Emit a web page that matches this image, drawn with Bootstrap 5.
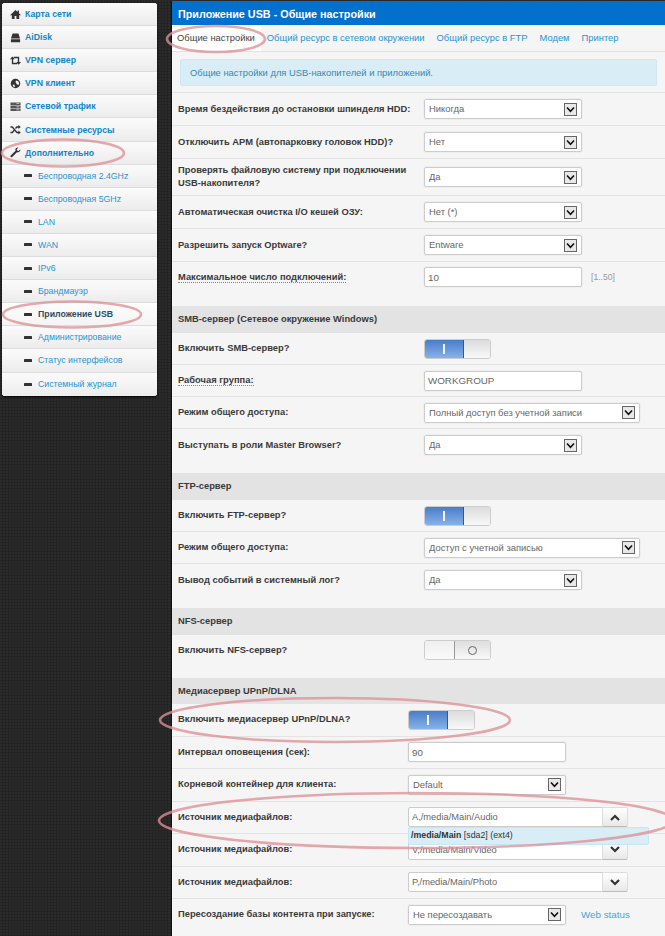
<!DOCTYPE html>
<html lang="ru">
<head>
<meta charset="utf-8">
<title>Приложение USB</title>
<link href="https://cdn.jsdelivr.net/npm/bootstrap@5.3.0/dist/css/bootstrap.min.css" rel="stylesheet">
<style>
html,body{height:936px;overflow:hidden}
body{background-color:#232323;background-image:radial-gradient(circle at 1px 1px,#2b2b2b 1px,transparent 1.2px);background-size:3px 3px;font-family:"Liberation Sans",Arial,sans-serif;font-size:9.4px;line-height:13px;color:#333;position:relative}
.page-wrap{padding-top:1px;height:936px}
.side-menu{width:155px;margin:2px 0 0 2px;border-radius:3px;box-shadow:0 1px 2px #000;background:#fff;height:393px;flex:none}
.side-menu .list-group-item{height:23.1px;padding:0 0 0 8px;border:0;border-bottom:1px solid #dcdcdc;background:linear-gradient(#fbfbfb,#ececec);color:#0f86c9;font-size:8.75px;line-height:22px;display:flex;align-items:center;gap:4px;font-weight:700;border-radius:0}
.side-menu .list-group-item:first-child{border-radius:3px 3px 0 0}
.side-menu .list-group-item:last-child{border-radius:0 0 3px 3px;border-bottom:0}
.side-menu .sub-item{padding-left:22px;font-weight:400;gap:6px;color:#2a93d2}
.side-menu .sub-item.current{font-weight:700;color:#2e4d66;background:linear-gradient(#fdfdfd,#f4f4f4)}
.ico{width:11px;height:11px;flex:none;fill:#333}
.dash{width:8px;height:3px;background:#333;flex:none;border-radius:.5px}
.main-pane{margin-left:14px;width:494px;flex:none;background:#f5f5f5;height:936px;overflow:hidden;border-left:1px solid #111}
.pane-head{height:24px;background:#0270cd;color:#fff;font-weight:700;font-size:10.8px;line-height:26px;padding-left:6px}
.tab-strip{height:27px;border-bottom:1px solid #e2e2e2;padding-left:0;flex-wrap:nowrap;font-size:9.4px}
.tab-strip .nav-link{padding:0 6px;line-height:26px;color:#2a93d2;border:0;border-radius:0;white-space:nowrap}
.tab-strip .nav-link.active{background:#fff;color:#444;padding:0 6px 0 5px;height:26px}
.note-box{margin:7px 8px 6px 8px;height:27px;padding:0 9px;display:flex;align-items:center;background:#d9edf7;border:1px solid #cfe7f2;border-radius:2px;color:#3a87ad;font-size:9.4px}
.cfg-row{height:32px;border-top:1px solid #e3e3e3;display:flex;align-items:center;padding:0 6px 0;font-size:9.35px}
.cfg-row.std{height:33px}
.cfg-row.tall{height:37px}
.cfg-row.trail{height:45px;align-items:flex-start;padding-top:5px}
.cfg-row.tail{height:45px;align-items:flex-start;padding-top:6px}
.cfg-row.tail.short{height:44px;padding-top:5px}
.media .cfg-row{height:32.5px}
.cfg-label{width:246px;flex:none;font-weight:700;color:#3a3a3a;margin:0}
.media .cfg-label{width:230px}
.dotted{border-bottom:1px dotted #888}
.sec-head{height:26px;background:#e3e3e3;font-weight:700;padding-left:6px;line-height:26px;color:#3a3a3a;font-size:9.35px}
.media .sec-head{height:25px}
.ctl{width:158px;height:20px;min-height:20px;padding:0 4px;font-size:9.4px;line-height:18px;color:#666;border:1px solid #ccc;border-radius:2px;box-shadow:0 0 0 1px #eee;background-color:#fff}
input.ctl{padding:0 3px;font-size:9.8px}
select.ctl{padding:0 18px 0 4px;appearance:none;background-repeat:no-repeat;background-position:right 4px center;background-size:13px 13px;background-image:url("data:image/svg+xml,%3Csvg xmlns='http://www.w3.org/2000/svg' viewBox='0 0 13 13'%3E%3Crect x='.5' y='.5' width='12' height='12' fill='%23e8e8e8' stroke='%23666'/%3E%3Cpath d='M3 4.500l3.500 3.800 3.500-3.800' fill='none' stroke='%23111' stroke-width='1.600'/%3E%3C/svg%3E")}
.ctl:focus{box-shadow:0 0 0 1px #eee;border-color:#ccc;color:#666}
.ctl.wide{width:216px}
.hint{color:#999;margin-left:9px;font-size:8.6px}
.flip{width:67px;height:20px;border:1px solid #ccc;border-radius:3px;overflow:hidden;display:flex;flex:none}
.flip-on{width:39px;background:linear-gradient(#4a7dc8,#86b2ea);border-right:1px solid #2f5a9a;display:flex;align-items:center;justify-content:center}
.flip-on i{width:1.5px;height:10px;background:#f2f6fb;display:block}
.flip-off{flex:1;background:linear-gradient(#dcdcdc,#f8f8f8)}
.flip-left{width:29px;background:linear-gradient(#efefef,#fafafa)}
.flip-right{flex:1;background:linear-gradient(#dedede,#f8f8f8);border-left:1px solid #999;display:flex;align-items:center;justify-content:center}
.flip-right i{width:9px;height:9px;border:1.4px solid #666;border-radius:50%;display:block}
.path-group{width:221px;flex-wrap:nowrap}
.path-group .ctl{width:195px;flex:none;border-radius:2px 0 0 2px;box-shadow:none;font-size:9.3px}
.path-btn{width:26px;height:20px;padding:0;border:1px solid #ddd;border-bottom-color:#bbb;border-radius:0 2px 2px 0;background:linear-gradient(#fff,#e8e8e8);display:flex;align-items:center;justify-content:center}
.path-btn svg{width:10px;height:7px}
.path-wrap{position:relative}
.path-menu{position:absolute;left:0;top:20px;width:241px;height:18px;z-index:5;background:#d9edf7;border:1px solid #c6e6f3;border-radius:2px;padding:0 2px;line-height:15px;font-size:8.8px;color:#333}
.status-link{margin-left:15px;color:#4aa3df;text-decoration:none;font-size:9.8px}
.marks{position:absolute;left:0;top:0;width:665px;height:936px;pointer-events:none;z-index:10}
.marks ellipse{fill:none;stroke:#dc8f96;stroke-opacity:.78;stroke-width:2.6}
</style>
</head>
<body>
<svg width="0" height="0" class="position-absolute">
<symbol id="i-home" viewBox="0 0 12 12"><path d="M6 1 0 6.700h2V11h3V7.500h2V11h3V6.700h2L9.800 4.600V1.500H8.300v1.700z"/></symbol>
<symbol id="i-hdd" viewBox="0 0 12 12"><path d="M2.800 1.500h6.400L11 7H1zM1 8h10v3.200H1z"/></symbol>
<symbol id="i-ret" viewBox="0 0 12 12"><path d="M2.500 1.500 5 4.500H3.500V8.500H8V10H2V4.500H0zM9.500 10.500 7 7.500H8.500V3.500H4V2H10V7.500H12z"/></symbol>
<symbol id="i-globe" viewBox="0 0 12 12"><path fill-rule="evenodd" d="M6 .8a5.200 5.200 0 1 0 0 10.400A5.200 5.200 0 0 0 6 .8zM7 2.700l2 .8 1 2.200-.6 2-1.700-.7L6.500 5.500 6 3.800zM3 7l1.800.4.700 1.800-.8 1L3.400 9z"/></symbol>
<symbol id="i-tasks" viewBox="0 0 12 12"><path d="M.5 1.500h11v3H.5zM.5 5.200h11v2.600H.5zM.5 8.500h11v2.500H.5z" fill="#555"/><path d="M7 2.300h3v.8H7zM7 6h3v.8H7zM7 9.300h3v.8H7z" fill="#ddd"/></symbol>
<symbol id="i-rand" viewBox="0 0 12 12"><path d="M.5 2.500h2.300l5 6h1.400V7l2.500 2.300-2.500 2.200V10H7.200l-5-6H.5zM.5 8.500h1.700L4 6.400l1 1.100L2.800 10H.5zM7.200 2.500h2V1l2.500 2.300L9.200 5.500V4H7.800L6.500 5.500l-1-1.100z"/></symbol>
<symbol id="i-wrench" viewBox="0 0 12 12"><path d="M11.300 2.500 9.300 4.300 7.800 3.900 7.400 2.500 9.300.6C7.800.1 6.100 1 5.900 2.500c-.1.500 0 1 .2 1.500L.8 9.200c-.5.500-.5 1.100 0 1.600s1.100.500 1.600 0L7.600 5.700c1.800.7 3.900-.9 3.700-3.200z"/></symbol>
</svg>

<div class="page-wrap d-flex">
  <div class="list-group side-menu">
    <a class="list-group-item"><svg class="ico"><use href="#i-home"/></svg>Карта сети</a>
    <a class="list-group-item"><svg class="ico"><use href="#i-hdd"/></svg>AiDisk</a>
    <a class="list-group-item"><svg class="ico"><use href="#i-ret"/></svg>VPN сервер</a>
    <a class="list-group-item"><svg class="ico"><use href="#i-globe"/></svg>VPN клиент</a>
    <a class="list-group-item"><svg class="ico"><use href="#i-tasks"/></svg>Сетевой трафик</a>
    <a class="list-group-item"><svg class="ico"><use href="#i-rand"/></svg>Системные ресурсы</a>
    <a class="list-group-item"><svg class="ico"><use href="#i-wrench"/></svg>Дополнительно</a>
    <a class="list-group-item sub-item"><span class="dash"></span>Беспроводная 2.4GHz</a>
    <a class="list-group-item sub-item"><span class="dash"></span>Беспроводная 5GHz</a>
    <a class="list-group-item sub-item"><span class="dash"></span>LAN</a>
    <a class="list-group-item sub-item"><span class="dash"></span>WAN</a>
    <a class="list-group-item sub-item"><span class="dash"></span>IPv6</a>
    <a class="list-group-item sub-item"><span class="dash"></span>Брандмауэр</a>
    <a class="list-group-item sub-item current"><span class="dash"></span>Приложение USB</a>
    <a class="list-group-item sub-item"><span class="dash"></span>Администрирование</a>
    <a class="list-group-item sub-item"><span class="dash"></span>Статус интерфейсов</a>
    <a class="list-group-item sub-item"><span class="dash"></span>Системный журнал</a>
  </div>

  <div class="main-pane">
    <div class="pane-head">Приложение USB - Общие настройки</div>
    <ul class="nav tab-strip">
      <li class="nav-item"><a class="nav-link active">Общие настройки</a></li>
      <li class="nav-item"><a class="nav-link">Общий ресурс в сетевом окружении</a></li>
      <li class="nav-item"><a class="nav-link">Общий ресурс в FTP</a></li>
      <li class="nav-item"><a class="nav-link">Модем</a></li>
      <li class="nav-item"><a class="nav-link">Принтер</a></li>
    </ul>
    <div class="alert note-box" role="alert">Общие настройки для USB-накопителей и приложений.</div>

    <div class="cfg-row std"><label class="cfg-label">Время бездействия до остановки шпинделя HDD:</label><select class="form-select ctl"><option>Никогда</option></select></div>
    <div class="cfg-row std"><label class="cfg-label">Отключить APM (автопарковку головок HDD)?</label><select class="form-select ctl"><option>Нет</option></select></div>
    <div class="cfg-row tall"><label class="cfg-label">Проверять файловую систему при подключении USB-накопителя?</label><select class="form-select ctl"><option>Да</option></select></div>
    <div class="cfg-row std"><label class="cfg-label">Автоматическая очистка I/O кешей ОЗУ:</label><select class="form-select ctl"><option>Нет (*)</option></select></div>
    <div class="cfg-row std"><label class="cfg-label">Разрешить запуск Optware?</label><select class="form-select ctl"><option>Entware</option></select></div>
    <div class="cfg-row trail"><label class="cfg-label mt-1"><span class="dotted">Максимальное число подключений:</span></label><input class="form-control ctl" value="10"><span class="hint mt-1">[1..50]</span></div>

    <div class="sec-head">SMB-сервер (Сетевое окружение Windows)</div>
    <div class="cfg-row"><label class="cfg-label">Включить SMB-сервер?</label><div class="flip"><div class="flip-on"><i></i></div><div class="flip-off"></div></div></div>
    <div class="cfg-row"><label class="cfg-label"><span class="dotted">Рабочая группа:</span></label><input class="form-control ctl" value="WORKGROUP"></div>
    <div class="cfg-row"><label class="cfg-label">Режим общего доступа:</label><select class="form-select ctl wide"><option>Полный доступ без учетной записи</option></select></div>
    <div class="cfg-row tail"><label class="cfg-label mt-1">Выступать в роли Master Browser?</label><select class="form-select ctl"><option>Да</option></select></div>

    <div class="sec-head">FTP-сервер</div>
    <div class="cfg-row"><label class="cfg-label">Включить FTP-сервер?</label><div class="flip"><div class="flip-on"><i></i></div><div class="flip-off"></div></div></div>
    <div class="cfg-row"><label class="cfg-label">Режим общего доступа:</label><select class="form-select ctl wide"><option>Доступ с учетной записью</option></select></div>
    <div class="cfg-row tail"><label class="cfg-label mt-1">Вывод событий в системный лог?</label><select class="form-select ctl"><option>Да</option></select></div>

    <div class="sec-head">NFS-сервер</div>
    <div class="cfg-row tail short"><label class="cfg-label mt-1">Включить NFS-сервер?</label><div class="flip"><div class="flip-left"></div><div class="flip-right"><i></i></div></div></div>

    <div class="media">
      <div class="sec-head">Медиасервер UPnP/DLNA</div>
      <div class="cfg-row"><label class="cfg-label">Включить медиасервер UPnP/DLNA?</label><div class="flip"><div class="flip-on"><i></i></div><div class="flip-off"></div></div></div>
      <div class="cfg-row"><label class="cfg-label">Интервал оповещения (сек):</label><input class="form-control ctl" value="90"></div>
      <div class="cfg-row"><label class="cfg-label">Корневой контейнер для клиента:</label><select class="form-select ctl"><option>Default</option></select></div>
      <div class="cfg-row"><label class="cfg-label">Источник медиафайлов:</label>
        <div class="path-wrap"><div class="input-group path-group"><input class="form-control ctl" value="A,/media/Main/Audio"><button class="btn path-btn" type="button"><svg viewBox="0 0 10 7"><path d="M1 6 5 2l4 4" fill="none" stroke="#333" stroke-width="2.200"/></svg></button></div>
        <div class="path-menu"><b>/media/Main</b> [sda2] (ext4)</div></div></div>
      <div class="cfg-row"><label class="cfg-label">Источник медиафайлов:</label>
        <div class="input-group path-group"><input class="form-control ctl" value="V,/media/Main/Video"><button class="btn path-btn" type="button"><svg viewBox="0 0 10 7"><path d="M1 1l4 4 4-4" fill="none" stroke="#333" stroke-width="2.200"/></svg></button></div></div>
      <div class="cfg-row"><label class="cfg-label">Источник медиафайлов:</label>
        <div class="input-group path-group"><input class="form-control ctl" value="P,/media/Main/Photo"><button class="btn path-btn" type="button"><svg viewBox="0 0 10 7"><path d="M1 1l4 4 4-4" fill="none" stroke="#333" stroke-width="2.200"/></svg></button></div></div>
      <div class="cfg-row"><label class="cfg-label">Пересоздание базы контента при запуске:</label><select class="form-select ctl"><option>Не пересоздавать</option></select><a class="status-link" href="#">Web status</a></div>
    </div>
  </div>
</div>

<svg class="marks" viewBox="0 0 665 936">
  <ellipse cx="63" cy="153" rx="61" ry="13.500"/>
  <ellipse cx="72" cy="314.500" rx="69" ry="13"/>
  <ellipse cx="216" cy="39" rx="49" ry="13"/>
  <ellipse cx="335" cy="720" rx="175" ry="22"/>
  <ellipse cx="416" cy="820.500" rx="257" ry="27.500"/>
</svg>
<script src="https://cdn.jsdelivr.net/npm/bootstrap@5.3.0/dist/js/bootstrap.bundle.min.js"></script>
</body>
</html>
